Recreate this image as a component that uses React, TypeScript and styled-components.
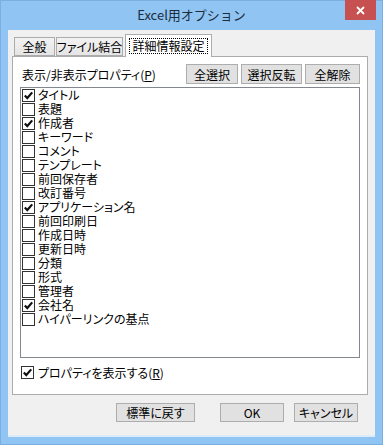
import React from "react";
import styled, { createGlobalStyle } from "styled-components";

const GlobalStyle = createGlobalStyle`
  html, body {
    margin: 0;
    padding: 0;
  }
  body {
    background: #8fc4f3;
    font-family: "Noto Sans CJK JP", "Liberation Sans", sans-serif;
  }
`;

const Frame = styled.div`
  width: 383px;
  height: 445px;
  box-sizing: border-box;
  background: #8fc4f3;
  box-shadow: inset 0 0 0 1px #79afe1;
  display: flex;
  flex-direction: column;
`;

const TitleBar = styled.div`
  height: 30px;
  display: grid;
  grid-template-columns: 1fr auto 1fr;
  align-items: start;
`;

const Title = styled.div`
  grid-column: 2;
  line-height: 30px;
  font-size: 13px;
  color: #1c2c3d;
`;

const CloseButton = styled.div`
  grid-column: 3;
  justify-self: end;
  margin-right: 7px;
  width: 31px;
  height: 20px;
  background: #c75050;
  display: flex;
  align-items: center;
  justify-content: center;
`;

const Client = styled.div`
  margin: 0 8px;
  height: 407px;
  box-sizing: border-box;
  background: #f0f0f0;
  border-bottom: 2px solid #dcebf9;
  display: flex;
  flex-direction: column;
  font-size: 12px;
  color: #000;
  font-feature-settings: "palt";
`;

const TabRow = styled.div`
  height: 26px;
  box-sizing: border-box;
  padding: 3px 0 0 6px;
  display: flex;
  align-items: flex-end;
`;

const Tab = styled.div<{ $w: number; $active?: boolean }>`
  width: ${(p) => p.$w}px;
  height: ${(p) => (p.$active ? 23 : 19)}px;
  box-sizing: border-box;
  margin-left: ${(p) => (p.$active ? 2 : 1)}px;
  margin-bottom: ${(p) => (p.$active ? -1 : 0)}px;
  border: 1px solid #acacac;
  border-bottom: ${(p) => (p.$active ? "none" : "1px solid #acacac")};
  background: ${(p) =>
    p.$active ? "#ffffff" : "linear-gradient(#f2f2f2, #e5e5e5)"};
  position: relative;
  z-index: ${(p) => (p.$active ? 1 : 0)};
  display: flex;
  align-items: center;
  justify-content: center;
  line-height: 14px;
  white-space: nowrap;
  &:first-child {
    margin-left: 0;
  }
`;

const FocusLabel = styled.span`
  display: inline-block;
  border: 1px dotted #000;
  padding: 0 2px;
`;

const Panel = styled.div`
  margin-left: 4px;
  width: 356px;
  height: 339px;
  box-sizing: border-box;
  border: 1px solid #acacac;
  background: #ffffff;
  padding: 7px 7px 0 7px;
  display: flex;
  flex-direction: column;
`;

const PanelHeader = styled.div`
  height: 20px;
  display: flex;
  align-items: center;
`;

const Label = styled.span`
  padding-left: 2px;
`;

const Key = styled.span`
  text-decoration: underline;
`;

const HeaderButtons = styled.div`
  margin-left: auto;
  display: flex;
  gap: 3px;
`;

const Button = styled.button<{ $w: number }>`
  width: ${(p) => p.$w}px;
  height: 20px;
  box-sizing: border-box;
  padding: 0;
  border: 1px solid #adadad;
  background: #e1e1e1;
  font-family: inherit;
  font-size: 12px;
  font-feature-settings: "palt";
  color: #000;
  white-space: nowrap;
`;

const List = styled.div`
  margin-top: 3px;
  height: 271px;
  box-sizing: border-box;
  border: 1px solid #828790;
  background: #ffffff;
  padding: 0 0 0 1px;
`;

const Row = styled.div`
  height: 14px;
  display: flex;
  align-items: center;
  white-space: nowrap;
`;

const Box = styled.span`
  width: 13px;
  height: 13px;
  box-sizing: border-box;
  border: 1px solid #333333;
  background: #ffffff;
  display: flex;
  align-items: center;
  justify-content: center;
  flex: none;
`;

const RowText = styled.span`
  display: inline-block;
  height: 14px;
  line-height: 14px;
  margin-left: 3px;
`;

const ShowRow = styled.div`
  margin-top: 8px;
  padding-left: 1px;
  height: 13px;
  display: flex;
  align-items: center;
`;

const ShowText = styled.span`
  display: inline-block;
  line-height: 14px;
  margin-left: 4px;
`;

const Footer = styled.div`
  margin-top: 8px;
  padding-right: 17px;
  display: flex;
  justify-content: flex-end;
  gap: 10px;

  & > button {
    height: 19px;
  }
  & > button:first-child {
    margin-right: 15px;
  }
`;

const Check = () => (
  <svg width="11" height="11" viewBox="0 0 11 11">
    <path
      d="M1.8 5.4 L4.3 8 L9.2 2.4"
      stroke="#111"
      strokeWidth="2.2"
      fill="none"
    />
  </svg>
);

const CheckBox: React.FC<{ checked?: boolean }> = ({ checked }) => (
  <Box>{checked && <Check />}</Box>
);

const properties: { name: string; checked?: boolean }[] = [
  { name: "タイトル", checked: true },
  { name: "表題" },
  { name: "作成者", checked: true },
  { name: "キーワード" },
  { name: "コメント" },
  { name: "テンプレート" },
  { name: "前回保存者" },
  { name: "改訂番号" },
  { name: "アプリケーション名", checked: true },
  { name: "前回印刷日" },
  { name: "作成日時" },
  { name: "更新日時" },
  { name: "分類" },
  { name: "形式" },
  { name: "管理者" },
  { name: "会社名", checked: true },
  { name: "ハイパーリンクの基点" },
];

export default function App() {
  return (
    <>
      <GlobalStyle />
      <Frame>
        <TitleBar>
          <Title>Excel用オプション</Title>
          <CloseButton>
            <svg width="9" height="9" viewBox="0 0 9 9">
              <path d="M1 1 L8 8 M8 1 L1 8" stroke="#fff" strokeWidth="1.8" />
            </svg>
          </CloseButton>
        </TitleBar>
        <Client>
          <TabRow>
            <Tab $w={41}>全般</Tab>
            <Tab $w={67}>ファイル結合</Tab>
            <Tab $w={87} $active>
              <FocusLabel>詳細情報設定</FocusLabel>
            </Tab>
          </TabRow>
          <Panel>
            <PanelHeader>
              <Label>
                表示/非表示プロパティ(<Key>P</Key>)
              </Label>
              <HeaderButtons>
                <Button $w={52}>全選択</Button>
                <Button $w={61}>選択反転</Button>
                <Button $w={55}>全解除</Button>
              </HeaderButtons>
            </PanelHeader>
            <List>
              {properties.map((p) => (
                <Row key={p.name}>
                  <CheckBox checked={p.checked} />
                  <RowText>{p.name}</RowText>
                </Row>
              ))}
            </List>
            <ShowRow>
              <CheckBox checked />
              <ShowText>
                プロパティを表示する(<Key>R</Key>)
              </ShowText>
            </ShowRow>
          </Panel>
          <Footer>
            <Button $w={79}>標準に戻す</Button>
            <Button $w={64}>OK</Button>
            <Button $w={64}>キャンセル</Button>
          </Footer>
        </Client>
      </Frame>
    </>
  );
}
